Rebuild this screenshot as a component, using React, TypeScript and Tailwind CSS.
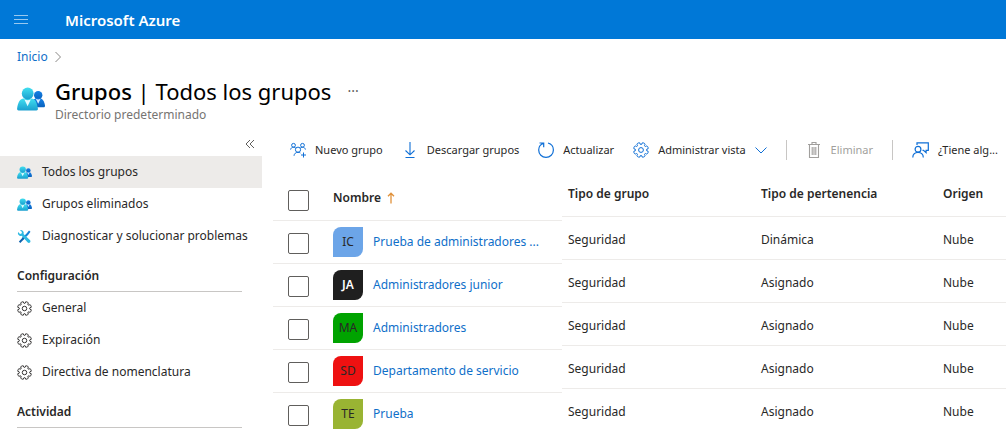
import React from 'react';

type IconProps = { className?: string };

function PeopleIcon({ className }: IconProps) {
  return (
    <svg viewBox="0 0 28 24" className={className} aria-hidden="true">
      <defs>
        <linearGradient id="personFront" x1="0" y1="0" x2="0" y2="1">
          <stop offset="0" stopColor="#41dff0" />
          <stop offset="1" stopColor="#1a9fcf" />
        </linearGradient>
        <linearGradient id="personBack" x1="0" y1="0" x2="0" y2="1">
          <stop offset="0" stopColor="#1580e6" />
          <stop offset="1" stopColor="#0a62bd" />
        </linearGradient>
      </defs>
      <circle cx="21.2" cy="8.2" r="4.2" fill="url(#personBack)" />
      <path d="M15 20.2h11.6c1 0 1.500-.8 1.400-1.700-.6-4-2.500-7-4.600-7h-4.400c-2.500 0-4.600 3-4.600 8.700z" fill="url(#personBack)" />
      <path d="M18.800 11.700l2.400 5 2.400-5c-1.500 1-3.300 1-4.800 0z" fill="#d8ecff" />
      <path d="M1.600 23.500h17.800c1 0 1.700-.9 1.500-2-.9-6.500-3.100-10-6.300-10H6.500c-3.200 0-5.500 3.600-6.400 10-.1 1.100.5 2 1.500 2z" fill="url(#personFront)" />
      <path d="M7.300 12.200l3.300 7 3.300-7c-2 1.300-4.600 1.300-6.600 0z" fill="#e6fbff" />
      <circle cx="10.700" cy="6.500" r="5.900" fill="url(#personFront)" />
    </svg>
  );
}

function ToolsIcon({ className }: IconProps) {
  return (
    <svg viewBox="0 0 16 16" className={className} fill="none" aria-hidden="true">
      <path d="M12.800 1.600L14.400 3l-2.600 3.400-5 4.800-1.600-1.500 5-5z" fill="#1583d8" />
      <path d="M6.600 8.600L2 13.200l1.500 1.700L8.200 10.200z" fill="#0f62ad" />
      <path
        d="M3.300 1.200l2 2-.4 1.700-1.700.4-2-2C.5 5 1.300 6.700 2.800 7.200c.8.300 1.500.2 2.100 0l6.300 6.800c.7.900 1.800 1.100 2.600.4.800-.7.700-1.900-.1-2.700L7 5.200c.4-1.300.1-2.500-.9-3.400-.8-.7-1.800-.9-2.800-.6z"
        fill="#2db9e2"
      />
    </svg>
  );
}

const gearPath = Array.from({ length: 8 }, (_, i) => {
  const steps: [number, number][] = [
    [5.4, -22.5],
    [5.8, -15],
    [7.2, -13],
    [7.5, -4],
    [7.5, 4],
    [7.2, 13],
    [5.8, 15],
  ];
  return steps.map(([r, a]) => {
    const t = ((i * 45 + 22.5 + a) * Math.PI) / 180;
    return `${(8 + r * Math.sin(t)).toFixed(2)} ${(8 - r * Math.cos(t)).toFixed(2)}`;
  });
}).flat();

function GearIcon({ className }: IconProps) {
  return (
    <svg viewBox="0 0 16 16" className={className} fill="none" stroke="currentColor" strokeWidth="1" strokeLinejoin="round" aria-hidden="true">
      <path d={`M${gearPath.join('L')}Z`} />
      <circle cx="8" cy="8" r="2.400" />
    </svg>
  );
}

function NewGroupIcon({ className }: IconProps) {
  return (
    <svg viewBox="0 0 16 16" className={className} fill="none" stroke="currentColor" strokeWidth="1" aria-hidden="true">
      <circle cx="3.500" cy="3.300" r="1.900" />
      <circle cx="12.500" cy="3.300" r="1.900" />
      <circle cx="8" cy="7.700" r="2.600" />
      <path d="M.6 7.600c.2-1.500 1.400-2.400 2.900-2.400 1 0 1.800.4 2.300 1M15.400 7.600c-.2-1.500-1.400-2.400-2.900-2.400-1 0-1.800.4-2.300 1M4 13.800c.2-2.200 1.800-3.500 4-3.500 1 0 1.800.2 2.400.7M13.500 10.500v5M11 13h5" />
    </svg>
  );
}

function DownloadIcon({ className }: IconProps) {
  return (
    <svg viewBox="0 0 16 16" className={className} fill="none" stroke="currentColor" strokeWidth="1.100" aria-hidden="true">
      <path d="M8 0v12.800M3.500 8.500l4.500 4.300 4.500-4.300M3.500 15.500h9" />
    </svg>
  );
}

function RefreshIcon({ className }: IconProps) {
  return (
    <svg viewBox="0 0 16 16" className={className} fill="none" stroke="currentColor" strokeWidth="1.200" aria-hidden="true">
      <path d="M1.500 1h4.200v4.200M5.700 1.300C2.800 2.200.7 4.700.7 8c0 4.100 3.200 7.400 7.300 7.400s7.400-3.300 7.400-7.400c0-3.400-2.300-6.200-5.400-7" />
    </svg>
  );
}

function TrashIcon({ className }: IconProps) {
  return (
    <svg viewBox="0 0 16 16" className={className} fill="none" stroke="currentColor" strokeWidth="1.100" aria-hidden="true">
      <path d="M2 2.500h12M6 2.500v-2h4v2M3.500 2.500v13h9v-13M6.200 5v8M8 5v8M9.800 5v8" />
    </svg>
  );
}

function FeedbackIcon({ className }: IconProps) {
  return (
    <svg viewBox="0 0 17 16" className={className} fill="none" stroke="currentColor" strokeWidth="1.200" aria-hidden="true">
      <path d="M5 3V.8h11.300v7.500h-2.200v2.400L11.500 8.300h-1" />
      <circle cx="6" cy="7.300" r="2.900" />
      <path d="M.8 15.500c0-3 2.200-5.200 5.200-5.200s5.300 2.200 5.300 5.200" />
    </svg>
  );
}

function SortUpIcon({ className }: IconProps) {
  return (
    <svg viewBox="0 0 8 12" className={className} fill="none" stroke="currentColor" strokeWidth="1.300" aria-hidden="true">
      <path d="M4 11.500V1.200M1 4.200l3-3 3 3" />
    </svg>
  );
}

function Chevron({ d, className }: IconProps & { d: string }) {
  return (
    <svg viewBox="0 0 12 12" className={className} fill="none" stroke="currentColor" strokeWidth="1" aria-hidden="true">
      <path d={d} />
    </svg>
  );
}

type NavEntry = { label: string; icon: (p: IconProps) => React.ReactElement; active?: boolean };

const mainNav: NavEntry[] = [
  { label: 'Todos los grupos', icon: PeopleIcon, active: true },
  { label: 'Grupos eliminados', icon: PeopleIcon },
  { label: 'Diagnosticar y solucionar problemas', icon: ToolsIcon },
];

const settingsNav: NavEntry[] = [
  { label: 'General', icon: GearIcon },
  { label: 'Expiración', icon: GearIcon },
  { label: 'Directiva de nomenclatura', icon: GearIcon },
];

function NavList({ items }: { items: NavEntry[] }) {
  return (
    <ul>
      {items.map(({ label, icon: Icon, active }) => (
        <li key={label}>
          <a
            href="#"
            aria-current={active ? 'page' : undefined}
            className={`flex h-8 items-center gap-2.5 pl-[17px] whitespace-nowrap ${active ? 'bg-[#edebe9]' : ''}`}
          >
            <Icon className="h-[15px] w-[15px] shrink-0" />
            {label}
          </a>
        </li>
      ))}
    </ul>
  );
}

function NavHeading({ children }: { children: React.ReactNode }) {
  return (
    <h2 className="mr-5 ml-[17px] flex h-10 items-center border-b border-[#c8c6c4] pt-2 font-semibold">
      {children}
    </h2>
  );
}

const groups = [
  { initials: 'IC', color: 'bg-[#6ca5e8]', name: 'Prueba de administradores ...', type: 'Seguridad', membership: 'Dinámica', source: 'Nube' },
  { initials: 'JA', color: 'bg-[#1f1f1f] text-white font-semibold', name: 'Administradores junior', type: 'Seguridad', membership: 'Asignado', source: 'Nube' },
  { initials: 'MA', color: 'bg-[#00a300]', name: 'Administradores', type: 'Seguridad', membership: 'Asignado', source: 'Nube' },
  { initials: 'SD', color: 'bg-[#ee1111]', name: 'Departamento de servicio', type: 'Seguridad', membership: 'Asignado', source: 'Nube' },
  { initials: 'TE', color: 'bg-[#99b433]', name: 'Prueba', type: 'Seguridad', membership: 'Asignado', source: 'Nube' },
];

function Check({ label }: { label: string }) {
  return (
    <input
      type="checkbox"
      aria-label={label}
      className="mt-1 block h-[21px] w-[21px] appearance-none rounded-xs border border-[#605e5c] bg-white checked:bg-[#0078d4]"
    />
  );
}

function Command({ icon, children, disabled }: { icon: React.ReactNode; children: React.ReactNode; disabled?: boolean }) {
  return (
    <button type="button" disabled={disabled} className="flex items-center gap-[9px] whitespace-nowrap disabled:text-[#a19f9d]">
      {icon}
      {children}
    </button>
  );
}

export default function App() {
  return (
    <div className="overflow-hidden bg-white font-['Noto_Sans','Open_Sans',sans-serif] text-[12px] leading-5 text-[#292827]">
      <header className="flex h-[39px] items-center gap-[37px] bg-[#0078d7] pl-3.5 text-white">
        <button type="button" aria-label="Menú" className="flex w-3.5 flex-col gap-[3px]">
          <span className="h-px w-full bg-white/60" />
          <span className="h-px w-full bg-white/60" />
          <span className="h-px w-full bg-white/60" />
        </button>
        <span className="text-[15px] font-semibold">Microsoft Azure</span>
      </header>

      <nav aria-label="Ruta" className="flex items-center gap-1 pt-2 pl-[17px] text-[#0f6fc9]">
        <a href="#">Inicio</a>
        <Chevron d="M3.500 1L8.500 6l-5 5" className="h-3 w-3 text-[#8a8886]" />
      </nav>

      <div className="flex items-start gap-2.5 pt-2 pl-[17px]">
        <PeopleIcon className="mt-3 h-6 w-7 shrink-0" />
        <div>
          <div className="flex items-center gap-4">
            <h1 className="text-[22px] leading-8 text-black">
              <span className="font-medium">Grupos</span> | Todos los grupos
            </h1>
            <button type="button" aria-label="Más opciones" className="text-[14px] text-[#605e5c]">···</button>
          </div>
          <p className="leading-4 text-[#767472]">Directorio predeterminado</p>
        </div>
      </div>

      <div className="flex items-start pt-2">
        <aside className="w-[262px] shrink-0 pt-px">
          <div className="flex h-6 items-center justify-end pr-1.5">
            <button type="button" aria-label="Contraer menú">
              <Chevron d="M6 2L2 6l4 4M10 2L6 6l4 4" className="h-3 w-3 text-[#605e5c]" />
            </button>
          </div>
          <NavList items={mainNav} />
          <NavHeading>Configuración</NavHeading>
          <NavList items={settingsNav} />
          <NavHeading>Actividad</NavHeading>
        </aside>

        <main className="min-w-0 flex-1 pl-[11px]">
          <div className="flex h-[42px] items-center gap-[19px] pr-2 pb-1 pl-[17px] text-[11px]">
            <Command icon={<NewGroupIcon className="h-4 w-4 text-[#0f6fd6]" />}>Nuevo grupo</Command>
            <Command icon={<DownloadIcon className="h-4 w-4 text-[#0f6fd6]" />}>Descargar grupos</Command>
            <Command icon={<RefreshIcon className="h-4 w-4 text-[#0f6fd6]" />}>Actualizar</Command>
            <Command icon={<GearIcon className="h-4 w-4 text-[#0f6fd6]" />}>
              Administrar vista
              <Chevron d="M.5 3.500L6 9l5.500-5.500" className="h-3 w-3 text-[#0f6fd6]" />
            </Command>
            <span className="h-5 w-px bg-[#c8c6c4]" />
            <Command disabled icon={<TrashIcon className="h-4 w-4" />}>Eliminar</Command>
            <span className="h-5 w-px bg-[#c8c6c4]" />
            <Command icon={<FeedbackIcon className="h-4 w-[17px] text-[#0f6fd6]" />}>¿Tiene alg...</Command>
          </div>

          <div className="flex items-start">
            <table aria-label="Grupos" className="mt-1 w-[289px] shrink-0 table-fixed border-collapse text-left">
              <thead>
                <tr className="h-[43px] border-b border-[#edebe9]">
                  <th className="w-[60px] pl-[15px]"><Check label="Seleccionar todos" /></th>
                  <th className="font-semibold" aria-sort="ascending">
                    <span className="flex items-center gap-1.5">
                      Nombre
                      <SortUpIcon className="h-3 w-2 text-[#e0913a]" />
                    </span>
                  </th>
                </tr>
              </thead>
              <tbody>
                {groups.map((g) => (
                  <tr key={g.name} className="h-[43px] border-b border-[#edebe9] last:border-0">
                    <td className="pl-[15px]"><Check label={`Seleccionar ${g.name}`} /></td>
                    <td>
                      <div className="flex items-center gap-2.5 whitespace-nowrap">
                        <span className={`flex h-[30px] w-[30px] shrink-0 items-center justify-center rounded-tl-lg rounded-br-lg ${g.color}`}>
                          {g.initials}
                        </span>
                        <a href="#" className="text-[#0f6fc9]">{g.name}</a>
                      </div>
                    </td>
                  </tr>
                ))}
              </tbody>
            </table>

            <table aria-label="Detalles de los grupos" className="min-w-0 flex-1 table-fixed border-collapse text-left whitespace-nowrap">
              <thead>
                <tr className="h-[43px] border-b border-[#edebe9]">
                  <th className="w-[193px] pl-1.5 font-semibold">Tipo de grupo</th>
                  <th className="w-[182px] pl-1.5 font-semibold">Tipo de pertenencia</th>
                  <th className="pl-1.5 font-semibold">Origen</th>
                </tr>
              </thead>
              <tbody>
                {groups.map((g) => (
                  <tr key={g.name} className="h-[43px] border-b border-[#edebe9] last:border-0">
                    <td className="pt-1 pl-1.5">{g.type}</td>
                    <td className="pt-1 pl-1.5">{g.membership}</td>
                    <td className="pt-1 pl-1.5">{g.source}</td>
                  </tr>
                ))}
              </tbody>
            </table>
          </div>
        </main>
      </div>
    </div>
  );
}
